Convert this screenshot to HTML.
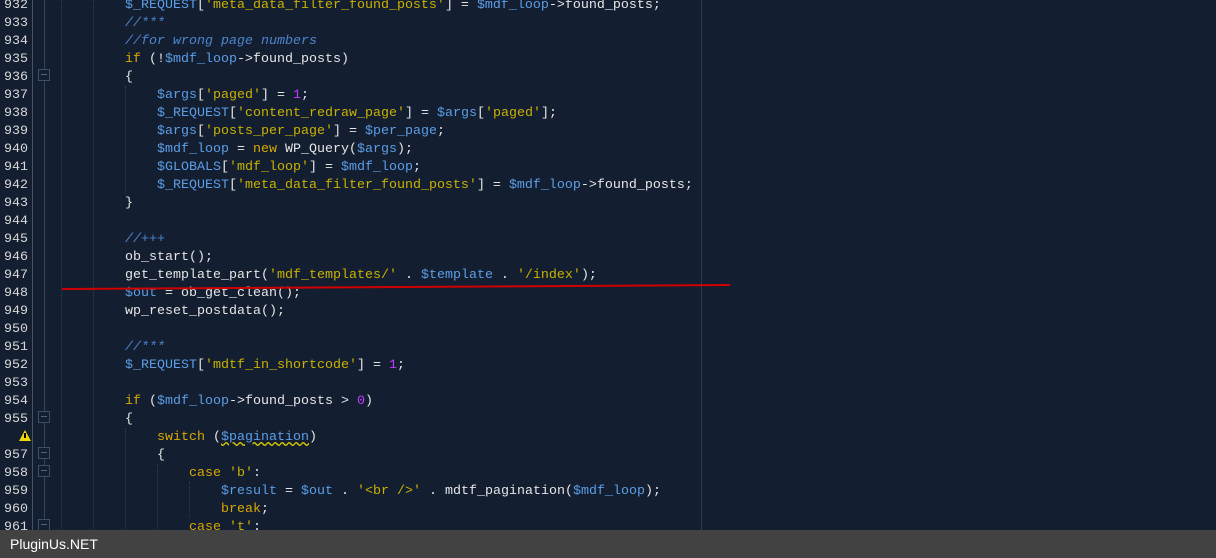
<!DOCTYPE html>
<html><head><style>
body{margin:0;width:1216px;height:558px;overflow:hidden;background:#131e30;position:relative;font-family:"Liberation Mono",monospace;font-size:13.33px;}
.l{position:absolute;left:0;height:18px;line-height:18px;white-space:pre;color:#e6e6e6}
.n{position:absolute;left:0;width:28px;text-align:right;color:#d8d8d8}
.c{position:absolute;left:125px}
.v{color:#5c9ee6}.s{color:#c9b200}.k{color:#d9a800}.m{color:#4d86cf;font-style:italic}.num{color:#c23cff}
.g{position:absolute;top:0;height:530px;border-left:1px dotted #2e3d55}
.fb{position:absolute;left:38px;width:10px;height:10px;border:1px solid #3a4f6c;background:#131e30}
.fb:after{content:"";position:absolute;left:2px;top:4px;width:6px;height:1px;background:#4d6384}
#foot{position:absolute;left:0;top:530px;width:1216px;height:28px;background:#424242;color:#fff;font-family:"Liberation Sans",sans-serif;font-size:14px;line-height:28px;padding-left:10px;box-sizing:border-box}
</style></head><body>
<div style="position:absolute;left:32px;top:0;width:1px;height:530px;background:#44536a"></div>
<div style="position:absolute;left:44px;top:0;width:1px;height:530px;background:#33465f"></div>
<div style="position:absolute;left:701px;top:0;width:1px;height:530px;background:#2c3a50"></div>
<div class="g" style="left:61px"></div><div class="g" style="left:93px"></div>
<div class="g" style="left:125px;top:86px;height:108px"></div>
<div class="g" style="left:125px;top:428px;height:102px"></div>
<div class="g" style="left:157px;top:464px;height:66px"></div>
<div class="g" style="left:189px;top:482px;height:36px"></div>
<div class="fb" style="top:69px"></div><div class="fb" style="top:411px"></div><div class="fb" style="top:447px"></div><div class="fb" style="top:465px"></div><div class="fb" style="top:519px"></div>
<div style="position:absolute;left:19px;top:430px;width:0;height:0;border-left:6px solid transparent;border-right:6px solid transparent;border-bottom:11px solid #f0d800"></div>
<div style="position:absolute;left:24px;top:433px;width:2px;height:5px;background:#000"></div>
<div id="code"></div>
<script>
const L=[
[932,0,'<span class="v">$_REQUEST</span>[<span class="s">\'meta_data_filter_found_posts\'</span>] = <span class="v">$mdf_loop</span>->found_posts;'],
[933,0,'<span class="m">//***</span>'],
[934,0,'<span class="m">//for wrong page numbers</span>'],
[935,0,'<span class="k">if</span> (!<span class="v">$mdf_loop</span>->found_posts)'],
[936,0,'{'],
[937,1,'<span class="v">$args</span>[<span class="s">\'paged\'</span>] = <span class="num">1</span>;'],
[938,1,'<span class="v">$_REQUEST</span>[<span class="s">\'content_redraw_page\'</span>] = <span class="v">$args</span>[<span class="s">\'paged\'</span>];'],
[939,1,'<span class="v">$args</span>[<span class="s">\'posts_per_page\'</span>] = <span class="v">$per_page</span>;'],
[940,1,'<span class="v">$mdf_loop</span> = <span class="k">new</span> WP_Query(<span class="v">$args</span>);'],
[941,1,'<span class="v">$GLOBALS</span>[<span class="s">\'mdf_loop\'</span>] = <span class="v">$mdf_loop</span>;'],
[942,1,'<span class="v">$_REQUEST</span>[<span class="s">\'meta_data_filter_found_posts\'</span>] = <span class="v">$mdf_loop</span>->found_posts;'],
[943,0,'}'],[944,0,''],
[945,0,'<span class="m">//+++</span>'],
[946,0,'ob_start();'],
[947,0,'get_template_part(<span class="s">\'mdf_templates/\'</span> . <span class="v">$template</span> . <span class="s">\'/index\'</span>);'],
[948,0,'<span class="v">$out</span> = ob_get_clean();'],
[949,0,'wp_reset_postdata();'],[950,0,''],
[951,0,'<span class="m">//***</span>'],
[952,0,'<span class="v">$_REQUEST</span>[<span class="s">\'mdtf_in_shortcode\'</span>] = <span class="num">1</span>;'],[953,0,''],
[954,0,'<span class="k">if</span> (<span class="v">$mdf_loop</span>->found_posts &gt; <span class="num">0</span>)'],
[955,0,'{'],
['',1,'<span class="k">switch</span> (<span class="v" style="text-decoration:underline wavy #e0d000">$pagination</span>)'],
[957,1,'{'],
[958,2,'<span class="k">case</span> <span class="s">\'b\'</span>:'],
[959,3,'<span class="v">$result</span> = <span class="v">$out</span> . <span class="s">\'&lt;br /&gt;\'</span> . mdtf_pagination(<span class="v">$mdf_loop</span>);'],
[960,3,'<span class="k">break</span>;'],
[961,2,'<span class="k">case</span> <span class="s">\'t\'</span>:']];
let h='';L.forEach((r,i)=>{h+=`<div class="l" style="top:${-3+i*18}px"><span class="n">${r[0]}</span><span class="c" style="left:${125+r[1]*32}px">${r[2]}</span></div>`});
document.getElementById('code').innerHTML=h;
</script>
<svg style="position:absolute;left:0;top:0" width="1216" height="530"><line x1="62" y1="289" x2="730" y2="285" stroke="#d00000" stroke-width="2"/></svg>
<div id="foot">PluginUs.NET</div>
</body></html>
